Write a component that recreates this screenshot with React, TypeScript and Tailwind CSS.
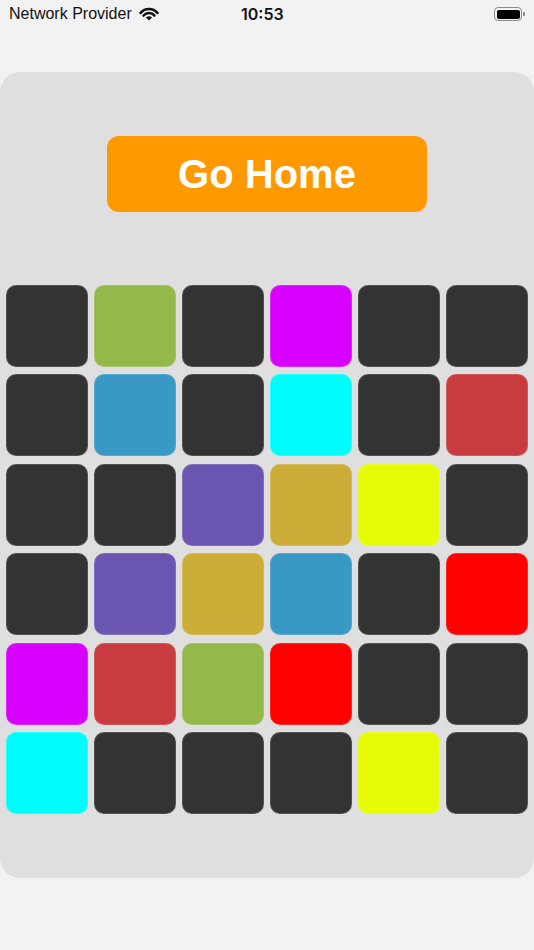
const DARK = "bg-[#333333]";

const rows: string[][] = [
  [DARK, "bg-[#95b84b]", DARK, "bg-[#d800ff]", DARK, DARK],
  [DARK, "bg-[#3a98c5]", DARK, "bg-[#00fcfb]", DARK, "bg-[#c83b3e]"],
  [DARK, DARK, "bg-[#6a55b1]", "bg-[#cbad38]", "bg-[#e5fc06]", DARK],
  [DARK, "bg-[#6a55b1]", "bg-[#cbad38]", "bg-[#3a98c5]", DARK, "bg-[#ff0000]"],
  ["bg-[#d800ff]", "bg-[#c83b3e]", "bg-[#95b84b]", "bg-[#ff0000]", DARK, DARK],
  ["bg-[#00fcfb]", DARK, DARK, DARK, "bg-[#e5fc06]", DARK],
];

function Wifi() {
  return (
    <svg width="20" height="14" viewBox="0 0 20 14" className="ml-[7px]">
      <g fill="none" stroke="#111" strokeWidth="2.6" strokeLinecap="round">
        <path d="M1.6 5.9A11 11 0 0 1 18.4 5.9" />
        <path d="M4.6 8.5A7 7 0 0 1 15.4 8.5" />
      </g>
      <path d="M10 13.6L6.9 10.5A4.3 4.3 0 0 1 13.1 10.5Z" fill="#111" />
    </svg>
  );
}

function Battery() {
  return (
    <div className="flex items-center">
      <div className="w-[28px] h-[14px] rounded-[4px] border border-[#8a8a8a] p-[1.5px]">
        <div className="w-full h-full rounded-[2px] bg-black" />
      </div>
      <div className="w-[2px] h-[4px] rounded-r-[1px] bg-[#8a8a8a] ml-[1px]" />
    </div>
  );
}

export default function App() {
  return (
    <div className="min-h-[950px] bg-[#f2f2f2] font-['Liberation_Sans',Arial,sans-serif]">
      {/* Status bar */}
      <div className="relative h-[28px] flex items-center justify-between px-[9px] text-[#111]">
        <div className="flex items-center text-[16px]">
          <span>Network Provider</span>
          <Wifi />
        </div>
        <span className="absolute left-[241px] font-['Inter',sans-serif] text-[16px] font-semibold">10:53</span>
        <Battery />
      </div>

      {/* Card */}
      <div className="mt-[44px] h-[806px] bg-[#dfdfdf] rounded-[20px] pt-[64px] flex flex-col">
        <div className="flex justify-center">
          <button className="w-[320px] h-[76px] rounded-[12px] bg-[#ff9900] text-white text-[40px] font-bold leading-none">
            Go Home
          </button>
        </div>

        <div className="mt-[73px] px-[6px] grid grid-cols-6 gap-x-[6px] gap-y-[7.4px]">
          {rows.flat().map((c, i) => (
            <div key={i} className={`h-[82px] rounded-[10px] border border-white/15 ${c}`} />
          ))}
        </div>
      </div>
    </div>
  );
}
